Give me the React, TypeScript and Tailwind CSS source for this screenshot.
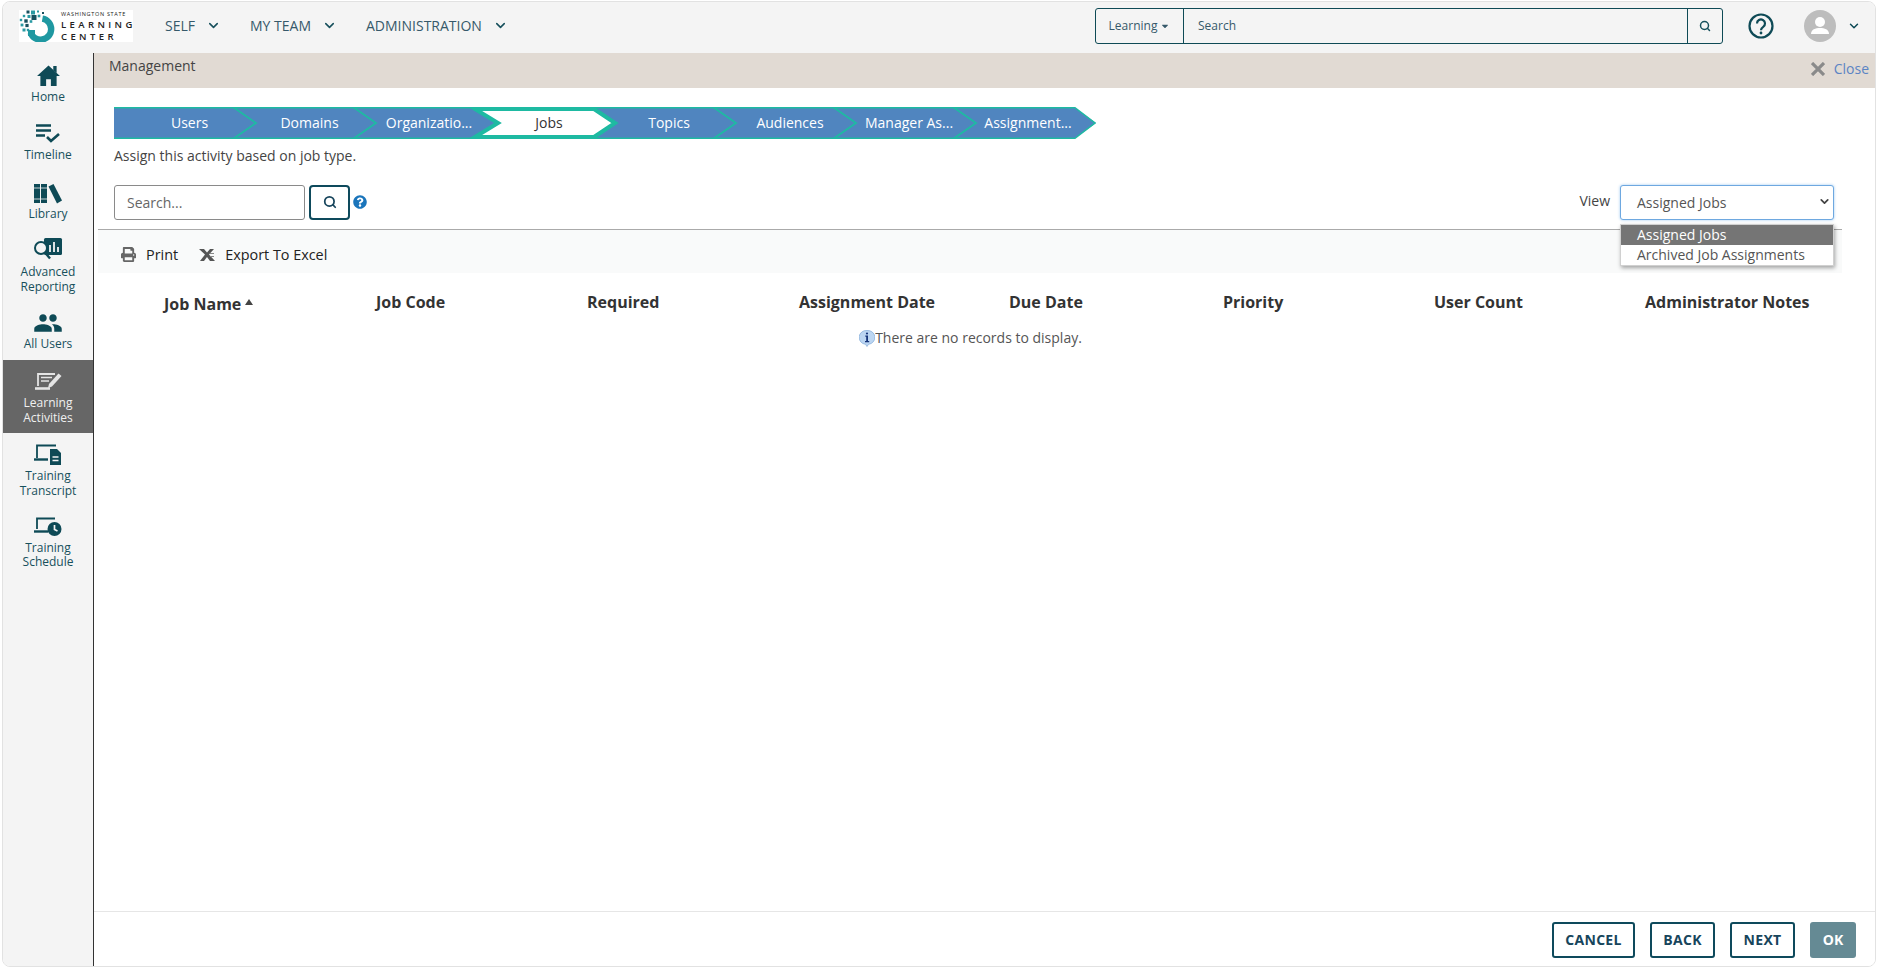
import React from "react";
import { FaPrint, FaQuestionCircle, FaCaretDown } from "react-icons/fa";
import { MdPeople } from "react-icons/md";
import { ChevronDown, Search } from "lucide-react";

const TEAL = "#0e4a56";

function Logo() {
  const dots = [[9,2,1.5],[14,2.500,2],[19,1.500,1],[24,3,1],[5,6,1.200],[10,6.500,1.500],[15,7.500,2.500],[20,6,1.300],[2,10,1.200],[7,11,1.700],[12,11.500,1.300],[3,15,1.400],[8,15.500,1.600],[5,20,1.500],[9,20,1.200]];
  return (
    <div className="flex h-[32px] w-[114px] items-center bg-white">
      <svg width="42" height="32" viewBox="0 0 42 32" className="shrink-0">
        {dots.map(([x, y, r], i) => (
          <rect key={i} x={x - r} y={y - r} width={r * 2} height={r * 2} fill={i % 3 === 0 ? "#17515f" : "#2a9aa3"} />
        ))}
        <path d="M23.400 8.600A10.600 10.600 0 1 1 11.600 22.600" fill="none" stroke="#1f98a1" strokeWidth="6.400" />
        <rect x="9" y="20" width="7" height="6" fill="#1f98a1" />
      </svg>
      <div className="flex flex-col text-[#222]">
        <span className="text-[5.5px] leading-[9px] tracking-[0.7px] whitespace-nowrap">WASHINGTON STATE</span>
        <span className="text-[9.5px] leading-[12px] font-semibold tracking-[3.4px] whitespace-nowrap">LEARNING</span>
        <span className="text-[9.5px] leading-[12px] font-semibold tracking-[3.4px] whitespace-nowrap">CENTER</span>
      </div>
    </div>
  );
}

function IconHome({ color }: { color: string }) {
  return (
    <svg width="23" height="21" viewBox="0 0 24 22" fill={color}>
      <path d="M12 0.500L24 11.500h-3.500V22H14.500v-7h-5v7H3.500V11.500H0z" />
      <path d="M17 1h3.500v7.500L17 5.500z" />
    </svg>
  );
}
function IconTimeline({ color }: { color: string }) {
  return (
    <svg width="26" height="22" viewBox="0 0 26 22" fill="none" stroke={color}>
      <path d="M1 3.500h15M1 8.500h15M1 13.500h9" strokeWidth="2.400" />
      <path d="M12 15l4 4 8-7" strokeWidth="2.600" />
    </svg>
  );
}
function IconLibrary({ color }: { color: string }) {
  return (
    <svg width="28" height="24" viewBox="0 0 28 24" fill={color} className="translate-y-[1px]">
      <rect x="0" y="3" width="6" height="19" />
      <rect x="7" y="3" width="6" height="19" />
      <path d="M14.500 5.500l5-2.500 8.500 16.500-5 3z" />
      <path d="M0 7h13M0 18h13" stroke="#f4f4f4" strokeWidth="0.800" />
    </svg>
  );
}
function IconReport({ color }: { color: string }) {
  return (
    <svg width="30" height="24" viewBox="0 0 30 24">
      <rect x="11" y="0" width="18" height="17" rx="1.500" fill={color} />
      <circle cx="8" cy="10" r="6" fill="#f4f4f4" stroke={color} strokeWidth="2" />
      <path d="M12 14.500l5 6" stroke={color} strokeWidth="2.400" />
      <path d="M17 7v7M21 4v10M25 9v5" stroke="#f4f4f4" strokeWidth="1.800" />
    </svg>
  );
}
function IconLearn() {
  const c = "#e4e4e4";
  return (
    <svg width="28" height="22" viewBox="0 0 28 22" fill="none" stroke={c}>
      <path d="M4 15V3h17" strokeWidth="1.800" />
      <path d="M7 6.500h11M7 10h8" strokeWidth="1.600" />
      <path d="M1 17.500h15" strokeWidth="2.600" />
      <path d="M14 17l1-4L24.500 2.500l3 2.500L18 15.500z" fill={c} stroke="none" />
    </svg>
  );
}
function IconLaptopDoc({ color }: { color: string }) {
  return (
    <svg width="28" height="22" viewBox="0 0 28 22">
      <path d="M3 14V1.500h19" fill="none" stroke={color} strokeWidth="1.800" />
      <path d="M0 15.500h14" stroke={color} strokeWidth="2.400" />
      <path d="M16 5h7l4 4v12H16z" fill={color} />
      <path d="M18.500 13h6M18.500 16.500h6" stroke="#f4f4f4" strokeWidth="1.400" />
    </svg>
  );
}
function IconLaptopClock({ color }: { color: string }) {
  return (
    <svg width="28" height="22" viewBox="0 0 28 22">
      <path d="M3 12V1.500h18" fill="none" stroke={color} strokeWidth="1.800" />
      <path d="M0 14.500h14" stroke={color} strokeWidth="2.400" />
      <circle cx="20.500" cy="12" r="7" fill={color} />
      <path d="M20.500 8v4.500l3 1.500" fill="none" stroke="#f4f4f4" strokeWidth="1.700" />
    </svg>
  );
}

function SideItem({ icon, label, h, active, text = "mt-[2px] leading-[15px]" }: { icon: React.ReactNode; label: string[]; h: string; active?: boolean; text?: string }) {
  return (
    <div className={`flex ${h} flex-col items-center pt-[10px] ${active ? "bg-[#666666] text-[#f0f0f0]" : "text-[#17505c]"}`}>
      <div className="flex h-[24px] items-center justify-center">{icon}</div>
      <div className={`text-center text-[12px] ${text}`}>
        {label.map((l) => (
          <div key={l}>{l}</div>
        ))}
      </div>
    </div>
  );
}

function Sidebar() {
  return (
    <aside className="flex w-[91px] shrink-0 flex-col border-r-[1.5px] border-[#333333] bg-[#f4f4f4]">
      <SideItem h="h-[58px]" label={["Home"]} icon={<IconHome color={TEAL} />} />
      <SideItem h="h-[59px]" label={["Timeline"]} icon={<IconTimeline color={TEAL} />} />
      <SideItem h="h-[58px]" label={["Library"]} icon={<IconLibrary color={TEAL} />} />
      <SideItem h="h-[73px]" label={["Advanced", "Reporting"]} icon={<IconReport color={TEAL} />} />
      <SideItem h="h-[59px]" text="mt-[1px] leading-[15px]" label={["All Users"]} icon={<MdPeople size={30} color={TEAL} />} />
      <SideItem h="h-[73px]" text="mt-[1px] leading-[15px]" active label={["Learning", "Activities"]} icon={<IconLearn />} />
      <SideItem h="h-[73px]" text="mt-[1px] leading-[15px]" label={["Training", "Transcript"]} icon={<IconLaptopDoc color={TEAL} />} />
      <SideItem h="h-[73px]" text="mt-[1px] leading-[14px]" label={["Training", "Schedule"]} icon={<IconLaptopClock color={TEAL} />} />
    </aside>
  );
}

function NavItem({ label, w }: { label: string; w: string }) {
  return (
    <div className={`flex ${w} items-center text-[14px] text-[#36596a]`}>
      <span>{label}</span>
      <ChevronDown size={15} strokeWidth={2.500} className="ml-[11px] text-[#17505c]" />
    </div>
  );
}

function TopBar() {
  return (
    <header className="flex h-[51px] shrink-0 items-center bg-[#f4f4f4] pb-[3px] pl-[16px] pr-[14px]">
      <Logo />
      <nav className="ml-[32px] flex items-center pb-[2px]">
        <NavItem w="w-[85px]" label="SELF" />
        <NavItem w="w-[116px]" label="MY TEAM" />
        <NavItem w="w-[150px]" label="ADMINISTRATION" />
      </nav>
      <div className="ml-auto flex h-[36px] w-[628px] items-stretch rounded-[3px] border border-[#0e4a56] text-[12px] text-[#36596a]">
        <div className="flex w-[88px] items-center justify-center gap-[3px] border-r border-[#0e4a56]">
          Learning
          <FaCaretDown size={10} />
        </div>
        <div className="flex flex-1 items-center pl-[14px]">Search</div>
        <div className="flex w-[35px] items-center justify-center border-l border-[#0e4a56]">
          <Search size={12} strokeWidth={3} color="#17505c" />
        </div>
      </div>
      <svg width="26" height="26" viewBox="0 0 26 26" fill="none" stroke={TEAL} className="ml-[25px]">
        <circle cx="13" cy="13" r="11.500" strokeWidth="2.200" />
        <path d="M9 10.500a4 4 0 1 1 6.200 3.300c-1.500 1-2.200 1.700-2.200 3.400" strokeWidth="2.200" />
        <circle cx="13" cy="20" r="1.400" fill={TEAL} stroke="none" />
      </svg>
      <svg width="32" height="32" viewBox="0 0 32 32" className="ml-[30px]">
        <circle cx="16" cy="16" r="16" fill="#bdbdbd" />
        <circle cx="16" cy="12" r="5" fill="#fff" />
        <path d="M7 24c0-4.500 4.500-6 9-6s9 1.500 9 6z" fill="#fff" />
      </svg>
      <ChevronDown size={14} strokeWidth={2.500} color={TEAL} className="ml-[11px]" />
    </header>
  );
}

const STEPS = [
  { t: "Users", w: "w-[119px]" },
  { t: "Domains", w: "w-[121px]" },
  { t: "Organizatio...", w: "w-[118px]" },
  { t: "Jobs", w: "w-[120px] pl-[2px]" },
  { t: "Topics", w: "w-[122px]" },
  { t: "Audiences", w: "w-[120px]" },
  { t: "Manager As...", w: "w-[118px]" },
  { t: "Assignment...", w: "w-[120px]" },
];

function Stepper() {
  const chev = [119, 239, 479, 599, 719, 839];
  return (
    <div className="relative h-[32px] w-[983px]">
      <svg width="983" height="32" viewBox="0 0 983 32" className="absolute inset-0">
        <polygon points="0,0 960,0 982,16 960,32 0,32" fill="#5085bf" />
        <path d="M0 .7H960M0 31.300H960M960 0L981 16L960 32" fill="none" stroke="#1ebaa2" strokeWidth="1.500" />
        {chev.map((x) => (
          <path key={x} d={`M${x} 0L${x + 23} 16L${x} 32`} fill="none" stroke="#1ebaa2" strokeWidth="1.800" />
        ))}
        <polygon points="361,2 480,2 501,16 480,30 361,30 384,16" fill="#fff" stroke="#1ebaa2" strokeWidth="4" />
      </svg>
      <div className="relative flex h-full pb-[2px] pl-[16px]">
        {STEPS.map((s) => (
          <div
            key={s.t}
            className={`flex ${s.w} items-center justify-center whitespace-nowrap text-[14px] ${s.t === "Jobs" ? "text-[#333333]" : "text-white"}`}
          >
            {s.t}
          </div>
        ))}
      </div>
    </div>
  );
}

function IconX() {
  return (
    <svg width="14" height="14" viewBox="0 0 14 14" stroke="#8a8a8a" strokeWidth="3.200">
      <path d="M1 1l12 12M13 1L1 13" />
    </svg>
  );
}

function IconExcel() {
  return (
    <svg width="16" height="12" viewBox="0 0 16 12" fill="#555">
      <path d="M0 0h5l3 3.500L11 0h4L10 5.500 16 12h-5L8 8 5 12H1l5-6.500z" />
      <path d="M11 4h4v1h-4zM11 7h4v1h-4z" fill="#888" />
    </svg>
  );
}

function InfoBubble() {
  return (
    <svg width="16" height="17" viewBox="0 0 16 17" className="shrink-0">
      <path d="M8 0.500a7 6.800 0 0 1 1.500 13.800L8 16.500l-1.500-2.200A7 6.800 0 0 1 8 0.500z" fill="#bcd6f2" stroke="#7ea9d8" strokeWidth="0.700" />
      <path d="M6.300 5.500h2.700v5.500h1.200v1.200H6v-1.200h1.200V6.700H6.300z" fill="#16357a" />
      <circle cx="8" cy="3.500" r="1.100" fill="#16357a" />
    </svg>
  );
}

const COLS = ["Job Code", "Required", "Assignment Date", "Due Date", "Priority", "User Count", "Administrator Notes"];

function ViewSelect() {
  return (
    <div className="relative h-[35px] w-[214px]">
      <div className="flex h-full items-center rounded-[3px] border border-[#6ea8e0] bg-white pl-[16px] text-[14px] text-[#555555] shadow-[0_0_3px_#9fc8f0]">
        Assigned Jobs
        <ChevronDown size={13} strokeWidth={3.200} color="#444" className="absolute right-[3px] top-[10px]" />
      </div>
      <div className="absolute left-0 top-[39px] z-10 w-[214px] border border-[#d0d0d0] bg-white text-[14px] leading-[20px] text-[#555555] shadow-[1px_2px_4px_rgba(0,0,0,0.35)]">
        <div className="bg-[#757575] pl-[16px] text-white">Assigned Jobs</div>
        <div className="pl-[16px]">Archived Job Assignments</div>
      </div>
    </div>
  );
}

function FootButton({ label, w }: { label: string; w: string }) {
  return (
    <div className={`flex h-[36px] ${w} items-center justify-center rounded-[3px] border-2 border-[#0e4a5c] pb-[1px] text-[14px] font-bold tracking-[0.3px] text-[#17455c]`}>
      {label}
    </div>
  );
}

export default function App() {
  return (
    <div className="h-screen w-full bg-white px-[2px] py-[1px] font-['Open_Sans',sans-serif]">
      <div className="flex h-full flex-col overflow-hidden rounded-[8px] border border-[#e2e2e2]">
        <TopBar />
        <div className="flex min-h-0 flex-1">
          <Sidebar />
          <main className="flex min-w-0 flex-1 flex-col bg-white">
            <div className="flex h-[35px] shrink-0 items-start justify-between bg-[#e1dad3] pl-[15px] pr-[6px]">
              <span className="mt-[3px] text-[14px] leading-[20px] text-[#444444]">Management</span>
              <span className="mt-[6px] flex items-center gap-[9px] text-[14px] leading-[20px] text-[#5b84c4]">
                <IconX />
                Close
              </span>
            </div>
            <div className="pl-[20px] pr-[19px] pt-[19px]">
              <Stepper />
              <p className="mt-[7px] text-[14px] leading-[20px] text-[#444444]">Assign this activity based on job type.</p>
            </div>
            <div className="mt-[18px] flex h-[36px] items-center pl-[20px] pr-[41px]">
              <div className="flex h-[35px] w-[191px] items-center rounded-[3px] border border-[#8a8a8a] pl-[12px] text-[14px] text-[#666666]">
                Search...
              </div>
              <div className="ml-[4px] flex h-[35px] w-[41px] items-center justify-center rounded-[4px] border-2 border-[#0e4a5c]">
                <Search size={14} strokeWidth={3} color="#17455c" />
              </div>
              <FaQuestionCircle size={14} color="#1b75bb" className="ml-[3px]" />
              <span className="ml-auto mr-[10px] -translate-y-[2px] text-[14px] text-[#444444]">View</span>
              <ViewSelect />
            </div>
            <div className="mx-[4px] mr-[33px] mt-[9px] h-[44px] border-t border-[#aaaaaa] bg-[#f9fafa]">
              <div className="flex h-full items-center pl-[23px] pt-[6px] text-[14.4px] font-medium text-[#222222]">
                <FaPrint size={15} color="#666666" />
                <span className="ml-[10px]">Print</span>
                <span className="ml-[21px]"><IconExcel /></span>
                <span className="ml-[10px]">Export To Excel</span>
              </div>
            </div>
            <div className="ml-[70px] mt-[17px] grid grid-cols-[212px_211px_212px_210px_214px_211px_211px_auto] text-[16px] font-bold leading-[24px] text-[#333333]">
              <div className="flex items-start pt-[2px]">
                Job Name
                <svg width="8" height="6" viewBox="0 0 8 6" className="ml-[4px] mt-[7px]"><path d="M4 0l4 6H0z" fill="#444" /></svg>
              </div>
              {COLS.map((c) => (
                <div key={c} className="whitespace-nowrap">{c}</div>
              ))}
            </div>
            <div className="mt-[12px] flex items-center justify-center pr-[28px] text-[14px] leading-[20px] text-[#555555]">
              <InfoBubble />
              <span>There are no records to display.</span>
            </div>
            <div className="mt-auto flex h-[55px] shrink-0 items-start justify-end gap-[15px] border-t border-[#e6e6e6] pr-[19px] pt-[10px]">
              <FootButton w="w-[83px]" label="CANCEL" />
              <FootButton w="w-[65px]" label="BACK" />
              <FootButton w="w-[65px]" label="NEXT" />
              <div className="flex h-[36px] w-[46px] items-center justify-center rounded-[3px] bg-[#658a94] pb-[1px] text-[14px] font-bold text-white">OK</div>
            </div>
          </main>
        </div>
      </div>
    </div>
  );
}
